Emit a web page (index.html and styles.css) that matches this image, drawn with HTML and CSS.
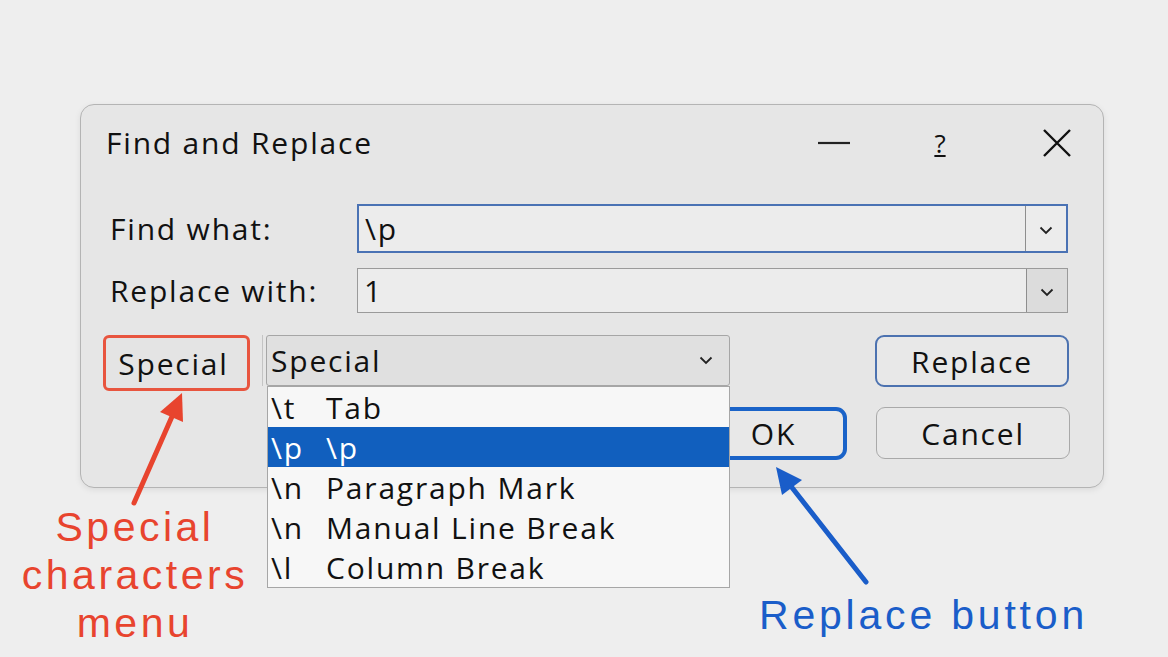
FILE: index.html
```html
<!DOCTYPE html>
<html lang="en">
<head>
  <meta charset="UTF-8" />
  <title>Find and Replace</title>
  <link rel="stylesheet" href="styles.css">
</head>
<body>
  <div class="dialog">
    <div class="titlebar">
      <h1>Find and Replace</h1>
      <span class="ctl ctl-min"><svg width="32" height="4" viewBox="0 0 32 4"><line x1="0" y1="2" x2="32" y2="2" stroke="#222" stroke-width="2.2"/></svg></span>
      <span class="ctl ctl-help">?</span>
      <span class="ctl ctl-close"><svg width="30" height="30" viewBox="0 0 30 30"><path d="M2 2 L28 28 M28 2 L2 28" stroke="#111" stroke-width="2.4" fill="none"/></svg></span>
    </div>

    <div class="row">
      <label class="lbl" for="findWhat">Find what:</label>
      <div class="combo combo-active">
        <input id="findWhat" value="\p">
        <span class="drop"><svg width="14" height="9" viewBox="0 0 14 9"><path d="M1.5 1.5 L7 7 L12.5 1.5" stroke="#222" stroke-width="1.8" fill="none"/></svg></span>
      </div>
    </div>

    <div class="row row-replace">
      <label class="lbl" for="replaceWith">Replace with:</label>
      <div class="combo">
        <input id="replaceWith" value="1">
        <span class="drop drop-grey"><svg width="14" height="9" viewBox="0 0 14 9"><path d="M1.5 1.5 L7 7 L12.5 1.5" stroke="#222" stroke-width="1.8" fill="none"/></svg></span>
      </div>
    </div>

    <div class="actions">
      <button class="btn-special">Special</button>
      <div class="select-wrap">
        <div class="select">
          <span>Special</span>
          <svg width="14" height="9" viewBox="0 0 14 9"><path d="M1.5 1.5 L7 7 L12.5 1.5" stroke="#222" stroke-width="1.8" fill="none"/></svg>
        </div>
        <ul class="menu">
          <li><span class="code">\t</span>Tab</li>
          <li class="selected"><span class="code">\p</span>\p</li>
          <li><span class="code">\n</span>Paragraph Mark</li>
          <li><span class="code">\n</span>Manual Line Break</li>
          <li><span class="code">\l</span>Column Break</li>
        </ul>
      </div>
      <button class="btn btn-replace">Replace</button>
    </div>

    <div class="actions actions-2">
      <button class="btn-ok">OK</button>
      <button class="btn btn-cancel">Cancel</button>
    </div>
  </div>

  <svg class="arrows" width="1168" height="657" viewBox="0 0 1168 657">
    <line x1="134" y1="503" x2="174" y2="412" stroke="#e8442e" stroke-width="5" stroke-linecap="round"/>
    <polygon points="182,393 183,422 160,412" fill="#e8442e"/>
    <line x1="866" y1="582" x2="790" y2="485" stroke="#1a5dc9" stroke-width="5" stroke-linecap="round"/>
    <polygon points="776,467 802,480 782,495" fill="#1a5dc9"/>
  </svg>

  <div class="note note-red">Special<br>characters<br>menu</div>
  <div class="note note-blue">Replace button</div>
</body>
</html>
```

FILE: styles.css
```css
* {
  box-sizing: border-box;
  margin: 0;
  padding: 0;
}

body {
  font-family: "Open Sans", "Noto Sans", sans-serif;
  background: #eeeeee;
  color: #111;
  padding: 104px 0 0 80px;
  width: 1168px;
  height: 657px;
  overflow: hidden;
  position: relative;
}

.dialog {
  width: 1024px;
  height: 384px;
  background: #e6e6e6;
  border: 1px solid #b4b4b4;
  border-radius: 14px;
  box-shadow: 0 2px 6px rgba(0, 0, 0, 0.08);
  font-size: 30px;
  letter-spacing: 1.8px;
}

.titlebar {
  display: flex;
  align-items: center;
  height: 75px;
  padding-left: 25px;
}

h1 {
  flex: 1;
  font-size: 30px;
  font-weight: 400;
}

.ctl {
  display: flex;
  align-items: center;
  justify-content: center;
  height: 40px;
}

.ctl-min { width: 32px; margin-right: 74px; }
.ctl-help { width: 32px; margin-right: 86px; font-size: 26px; letter-spacing: 0; text-decoration: underline; }
.ctl-close { width: 30px; margin-right: 31px; }

.row {
  display: flex;
  align-items: center;
  margin-top: 24px;
  height: 49px;
}

.row-replace {
  margin-top: 15px;
  height: 45px;
}

.lbl {
  width: 276px;
  padding-left: 29px;
}

.combo {
  display: flex;
  width: 711px;
  height: 100%;
  border: 1px solid #9a9a9a;
  background: #ececec;
}

.combo-active {
  border: 2px solid #4a72b4;
}

.combo input {
  flex: 1;
  min-width: 0;
  border: none;
  background: transparent;
  font-family: inherit;
  font-size: 30px;
  letter-spacing: 1.8px;
  padding-left: 6px;
  color: #111;
  outline: none;
}

.drop {
  width: 41px;
  display: flex;
  align-items: center;
  justify-content: center;
  border-left: 1px solid #8e8e8e;
  padding-top: 4px;
}

.drop-grey {
  background: #dcdcdc;
}

.actions {
  display: flex;
  align-items: flex-start;
  margin-top: 22px;
  padding-left: 22px;
  height: 56px;
}

.btn-special {
  width: 147px;
  height: 56px;
  padding-right: 6px;
  border: 3px solid #e8553f;
  border-radius: 6px;
  background: #e4e4e4;
  font-family: inherit;
  font-size: 30px;
  letter-spacing: 1.8px;
  color: #111;
}

.select-wrap {
  position: relative;
  margin-left: 12px;
  padding-left: 3px;
  border-left: 1px solid #c4c4c4;
}

.select {
  display: flex;
  align-items: center;
  justify-content: space-between;
  width: 464px;
  height: 51px;
  padding: 0 16px 0 4px;
  border: 1px solid #a6a6a6;
  border-radius: 3px;
  background: #e0e0e0;
}

.menu {
  position: absolute;
  top: 51px;
  left: 4px;
  width: 463px;
  list-style: none;
  background: #f7f7f7;
  border: 1px solid #a6a6a6;
  z-index: 2;
}

.menu li {
  display: flex;
  align-items: center;
  height: 40px;
  padding-left: 3px;
}

.menu li.selected {
  background: #115fbe;
  color: #fff;
}

.code {
  width: 55px;
}

.btn {
  width: 194px;
  height: 52px;
  border: 1px solid #a9a9a9;
  border-radius: 9px;
  background: #e8e8e8;
  font-family: inherit;
  font-size: 30px;
  letter-spacing: 1.8px;
  color: #111;
}

.btn-replace {
  margin-left: 145px;
  border: 2px solid #4c72b0;
}

.actions-2 {
  margin-top: 16px;
  padding-left: 619px;
  height: 53px;
}

.btn-ok {
  width: 147px;
  height: 53px;
  border: 4px solid #1a63c8;
  border-radius: 11px;
  background: #e8e8e8;
  font-family: inherit;
  font-size: 30px;
  letter-spacing: 1.8px;
  color: #111;
}

.btn-cancel {
  margin-left: 29px;
}

.arrows {
  position: absolute;
  left: 0;
  top: 0;
  pointer-events: none;
}

.note {
  position: absolute;
  font-family: "Liberation Sans", Arial, sans-serif;
  font-size: 41px;
  letter-spacing: 3.5px;
  line-height: 48px;
}

.note-red {
  left: 4px;
  top: 503px;
  width: 262px;
  text-align: center;
  color: #e8442e;
}

.note-blue {
  left: 759px;
  top: 591px;
  letter-spacing: 3.8px;
  color: #1a5dc9;
}
```
